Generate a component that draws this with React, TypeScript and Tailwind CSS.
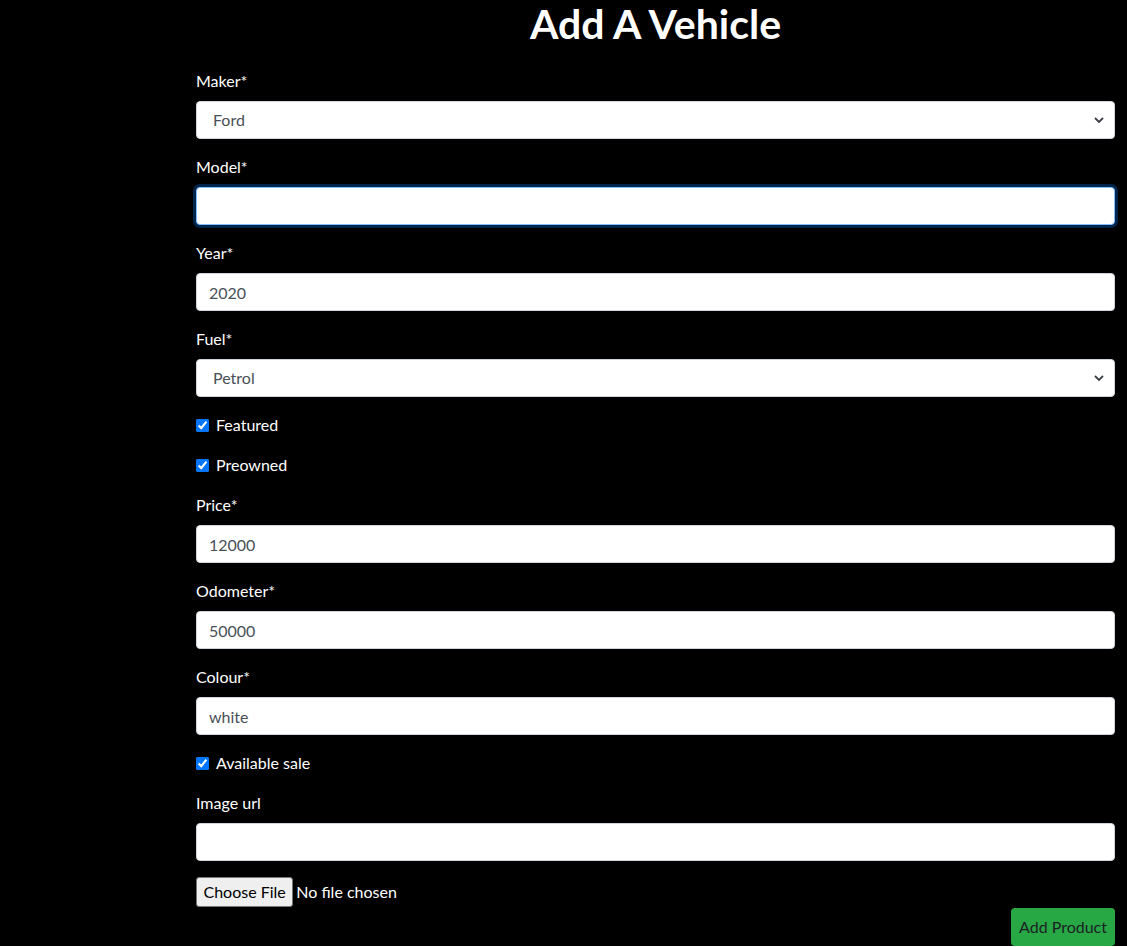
import React from "react";

const font = { fontFamily: "Lato, 'Noto Sans', sans-serif" };

function Label({ children }: { children: React.ReactNode }) {
  return <label className="block leading-6 mb-2 text-[16px]">{children}</label>;
}

function TextField({ label, value, focused }: { label: string; value?: string; focused?: boolean }) {
  return (
    <div className="mb-4">
      <Label>{label}</Label>
      <input
        type="text"
        defaultValue={value}
        className={
          "block w-full h-[38px] bg-white rounded-[4px] px-3 text-[16px] text-[#495057] outline-none border " +
          (focused
            ? "border-[#80bdff] shadow-[0_0_0_3px_rgba(0,123,255,0.3)]"
            : "border-[#ced4da]")
        }
      />
    </div>
  );
}

function SelectField({ label, value }: { label: string; value: string }) {
  return (
    <div className="mb-4">
      <Label>{label}</Label>
      <div className="relative h-[38px] bg-white border border-[#ced4da] rounded-[4px] flex items-center pl-4 text-[16px] text-[#495057]">
        <span>{value}</span>
        <svg
          className="absolute right-[10px] top-1/2 -translate-y-1/2"
          width="10"
          height="7"
          viewBox="0 0 10 7"
          fill="none"
        >
          <path d="M1 1.5 L5 5.5 L9 1.5" stroke="#3c4046" strokeWidth="1.8" />
        </svg>
      </div>
    </div>
  );
}

function Check({ label }: { label: string }) {
  return (
    <div className="mb-4 flex items-center h-6">
      <input type="checkbox" defaultChecked className="w-[13px] h-[13px] m-0 accent-[#0075ff]" />
      <span className="ml-[7px] leading-6 text-[16px]">{label}</span>
    </div>
  );
}

export default function App() {
  return (
    <div className="bg-black text-white" style={font}>
      <div className="ml-[196px] mr-[12px]">
        <h1 className="text-[41px] font-bold leading-[48px] text-center mb-[21px]">Add A Vehicle</h1>
        <SelectField label="Maker*" value="Ford" />
        <TextField label="Model*" focused />
        <TextField label="Year*" value="2020" />
        <SelectField label="Fuel*" value="Petrol" />
        <Check label="Featured" />
        <Check label="Preowned" />
        <TextField label="Price*" value="12000" />
        <TextField label="Odometer*" value="50000" />
        <TextField label="Colour*" value="white" />
        <Check label="Available sale" />
        <TextField label="Image url" />
        <div className="flex items-center h-[30px] text-[16px]">
          <span className="h-[30px] px-[6.5px] flex items-center bg-[#efefef] text-black border border-[#767676] rounded-[3px]">
            Choose File
          </span>
          <span className="ml-[3px]">No file chosen</span>
        </div>
        <div className="flex justify-end pt-px">
          <button className="h-[38px] px-[8px] bg-[#28a745] text-[#1b1f22] rounded-[4px] text-[16px]">
            Add Product
          </button>
        </div>
      </div>
    </div>
  );
}
